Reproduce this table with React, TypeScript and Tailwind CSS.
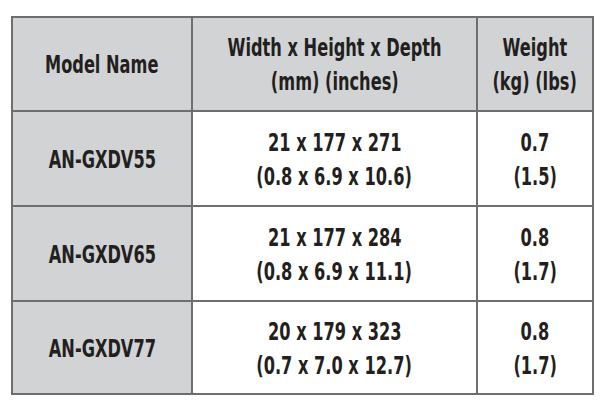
import { Fragment } from 'react';

const rows = [
  { model: 'AN-GXDV55', mm: '21 x 177 x 271', inch: '(0.8 x 6.9 x 10.6)', kg: '0.7', lbs: '(1.5)' },
  { model: 'AN-GXDV65', mm: '21 x 177 x 284', inch: '(0.8 x 6.9 x 11.1)', kg: '0.8', lbs: '(1.7)' },
  { model: 'AN-GXDV77', mm: '20 x 179 x 323', inch: '(0.7 x 7.0 x 12.7)', kg: '0.8', lbs: '(1.7)' },
];

function Cell({ grey, head, lines }: { grey?: boolean; head?: boolean; lines: string[] }) {
  return (
    <div
      className={`flex flex-col items-center justify-center gap-[10px] ${head ? 'pt-[1px]' : 'pt-[3px]'} ${
        grey ? 'bg-[#d1d3d4]' : 'bg-white'
      }`}
    >
      {lines.map((l) => (
        <span key={l} className="block leading-[24px] whitespace-nowrap scale-x-[0.72]">
          {l}
        </span>
      ))}
    </div>
  );
}

export default function App() {
  return (
    <div className="w-[605px] h-[406px] bg-white pt-[16px] pl-[11px]">
      <div
        className="grid w-[583px] grid-cols-[178px_283px_114px] grid-rows-[92px_93px_93px_91px] gap-[2px] bg-[#6d6e71] p-[2px] text-[25px] font-bold text-[#231f20] font-stretch-condensed"
        style={{ fontFamily: '"DejaVu Sans Condensed", "DejaVu Sans", sans-serif' }}
      >
        <Cell grey head lines={['Model Name']} />
        <Cell grey head lines={['Width x Height x Depth', '(mm) (inches)']} />
        <Cell grey head lines={['Weight', '(kg) (lbs)']} />
        {rows.map((r) => (
          <Fragment key={r.model}>
            <Cell grey lines={[r.model]} />
            <Cell lines={[r.mm, r.inch]} />
            <Cell lines={[r.kg, r.lbs]} />
          </Fragment>
        ))}
      </div>
    </div>
  );
}
